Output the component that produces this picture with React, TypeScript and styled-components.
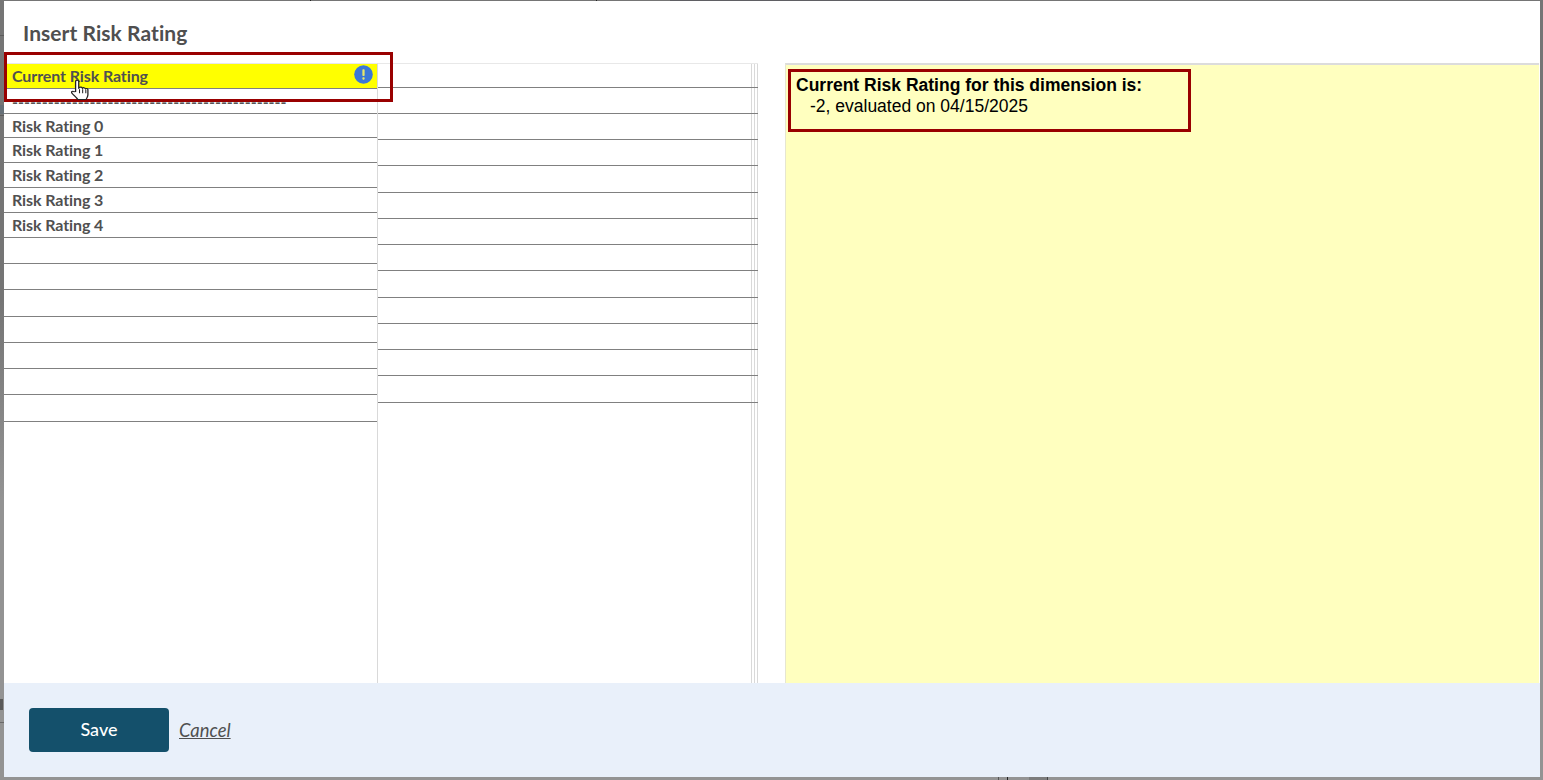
import React from "react";
import styled, { createGlobalStyle } from "styled-components";

const Global = createGlobalStyle`
  html, body { margin: 0; padding: 0; height: 780px; overflow: hidden; background: #8c8c8c; }
  #root { height: 780px; }
`;

const line = (x: number, y: number, w: number, h: number, c: string) =>
  `linear-gradient(${c}, ${c}) ${x}px ${y}px / ${w}px ${h}px no-repeat`;

const backdropMarks = [
  line(310, 0, 1, 1, "#222"),
  line(596, 0, 1, 1, "#222"),
  line(670, 0, 300, 1, "#5f5f63"),
  line(0, 35, 4, 1, "#5c5c5c"),
  line(0, 105, 4, 9, "#667078"),
  line(0, 115, 4, 1, "#5c5c5c"),
  line(0, 699, 3, 11, "#5a5a5a"),
  line(0, 722, 4, 1, "#6a6a6a"),
  line(998, 777, 1, 3, "#555"),
  line(1007, 777, 1, 3, "#222"),
  line(1029, 777, 18, 3, "#7c7c7c"),
  line(1047, 777, 1, 3, "#444"),
].join(", ");

const Backdrop = styled.div`
  width: 1543px;
  height: 780px;
  box-sizing: border-box;
  padding: 1px 3px 3px 4px;
  background: ${backdropMarks}, linear-gradient(#757575, #757575 300px, #939393 500px);
`;

const Modal = styled.div`
  height: 776px;
  display: flex;
  flex-direction: column;
  background: #fff;
  font-family: Lato, "Liberation Sans", sans-serif;
`;

const Title = styled.h1`
  margin: 0;
  height: 62px;
  box-sizing: border-box;
  padding: 19px 0 0 19px;
  font-size: 21px;
  line-height: 26px;
  font-weight: 700;
  letter-spacing: 0.06px;
  color: #4f4f4f;
`;

const Body = styled.div`
  flex: 1;
  display: flex;
  min-height: 0;
`;

const LeftColumn = styled.div`
  position: relative;
  width: 374px;
  box-sizing: border-box;
  border-top: 1px solid #e8e8e8;
  border-right: 1px solid #d9d9d9;
`;

const MiddleColumn = styled.div`
  width: 380px;
  box-sizing: border-box;
  border-top: 1px solid #e8e8e8;
  background:
    linear-gradient(#d9d9d9, #d9d9d9) 373px 0 / 1px 100% no-repeat,
    linear-gradient(#d9d9d9, #d9d9d9) 376px 0 / 1px 100% no-repeat,
    linear-gradient(#d9d9d9, #d9d9d9) 379px 0 / 1px 100% no-repeat;
`;

const Row = styled.div<{ $h: number; $active?: boolean }>`
  height: ${(p) => p.$h}px;
  box-sizing: border-box;
  display: flex;
  align-items: center;
  justify-content: space-between;
  padding: 0 4px 1px 8px;
  border-bottom: 1px solid #808080;
  background: ${(p) => (p.$active ? "#ffff00" : "transparent")};
  font-size: 16px;
  font-weight: 700;
  letter-spacing: -0.1px;
  color: #505050;
`;

const DashRow = styled(Row)`
  color: #555;
  letter-spacing: 0;
  white-space: nowrap;
`;

const DashText = styled.span`
  display: block;
  transform: translateY(1px);
`;

const InfoDot = styled.svg`
  width: 19px;
  height: 19px;
  margin-bottom: 2px;
  flex: none;
`;

const Callout = styled.div`
  position: absolute;
  left: 0;
  top: -12px;
  width: 389px;
  height: 50px;
  box-sizing: border-box;
  border: 3px solid #990000;
  pointer-events: none;
`;

const Pointer = styled.svg`
  position: absolute;
  left: 67px;
  top: 16px;
  width: 19px;
  height: 20px;
`;

const Gutter = styled.div`
  width: 27px;
  flex: none;
`;

const NotePanel = styled.div`
  flex: 1;
  margin-right: 1px;
  box-sizing: border-box;
  padding: 4px 0 0 2px;
  background: #ffffbf;
  border-top: 2px solid #dcdcdc;
  border-left: 1px solid #e6e6d0;
  font-family: "Liberation Sans", Arial, sans-serif;
  font-size: 17.5px;
  line-height: 21px;
  color: #000;
`;

const NoteBox = styled.div`
  width: 403px;
  height: 63px;
  box-sizing: border-box;
  padding: 3px 0 0 5px;
  border: 3px solid #990000;
`;

const NoteHeading = styled.div`
  font-weight: 700;
`;

const NoteValue = styled.div`
  padding-left: 14px;
`;

const Footer = styled.div`
  height: 94px;
  flex: none;
  box-sizing: border-box;
  display: flex;
  align-items: center;
  gap: 10px;
  padding: 0 0 0 25px;
  background: #e9f0fa;
`;

const SaveButton = styled.button`
  width: 140px;
  height: 44px;
  border: 0;
  border-radius: 4px;
  padding: 0 0 2px;
  background: #14506b;
  color: #fff;
  font-family: Lato, sans-serif;
  font-size: 18px;
  font-weight: 500;
`;

const CancelLink = styled.a`
  font-size: 18.4px;
  font-style: italic;
  text-decoration: underline;
  color: #505050;
`;

const leftRows = [
  { h: 25, text: "", active: true },
  { h: 25, text: "dashes" },
  { h: 24, text: "Risk Rating 0" },
  { h: 25, text: "Risk Rating 1" },
  { h: 25, text: "Risk Rating 2" },
  { h: 25, text: "Risk Rating 3" },
  { h: 25, text: "Risk Rating 4" },
  { h: 26, text: "" },
  { h: 26, text: "" },
  { h: 27, text: "" },
  { h: 26, text: "" },
  { h: 26, text: "" },
  { h: 26, text: "" },
  { h: 27, text: "" },
];

const middleRows = [24, 26, 26, 26, 27, 26, 26, 26, 27, 26, 26, 26, 27];

export default function App() {
  return (
    <Backdrop>
      <Global />
      <Modal>
        <Title>Insert Risk Rating</Title>
        <Body>
          <LeftColumn>
            {leftRows.map((r, i) => {
              if (r.active) {
                return (
                  <Row key={i} $h={r.h} $active>
                    <span>Current Risk Rating</span>
                    <InfoDot viewBox="0 0 20 20">
                      <circle cx="10" cy="10" r="9.8" fill="#3b78d8" />
                      <rect x="8.8" y="4.5" width="2.4" height="7" rx="0.8" fill="#e8e86a" />
                      <rect x="8.8" y="13" width="2.4" height="2.4" rx="0.8" fill="#e8e86a" />
                    </InfoDot>
                  </Row>
                );
              }
              if (r.text === "dashes") {
                return (
                  <DashRow key={i} $h={r.h}>
                    <DashText>{"-".repeat(46)}</DashText>
                  </DashRow>
                );
              }
              return (
                <Row key={i} $h={r.h}>
                  {r.text}
                </Row>
              );
            })}
            <Callout />
            <Pointer viewBox="1.5 1 14.5 19.5" preserveAspectRatio="none">
              <path
                d="M5 2.5c0-1.6 2.4-1.6 2.4 0V9l.4-.2c.3-1.2 2-1.1 2.2 0l.3.3c.4-1 1.9-.8 2 .3l.3.3c.5-.7 1.7-.4 1.8.6v5.2c0 2-.8 3-1.4 4.5H6.7c-.5-1.4-3.8-5-4.6-6.4-.6-1.1.7-2.1 1.7-1.2L5 12.3z"
                fill="#fff"
                stroke="#222"
                strokeWidth="1"
              />
              <path d="M8 10v4M10.4 10v4M12.8 10.5V14" stroke="#222" strokeWidth="0.8" fill="none" />
            </Pointer>
          </LeftColumn>
          <MiddleColumn>
            {middleRows.map((h, i) => (
              <Row key={i} $h={h} />
            ))}
          </MiddleColumn>
          <Gutter />
          <NotePanel>
            <NoteBox>
              <NoteHeading>Current Risk Rating for this dimension is:</NoteHeading>
              <NoteValue>-2, evaluated on 04/15/2025</NoteValue>
            </NoteBox>
          </NotePanel>
        </Body>
        <Footer>
          <SaveButton>Save</SaveButton>
          <CancelLink>Cancel</CancelLink>
        </Footer>
      </Modal>
    </Backdrop>
  );
}
